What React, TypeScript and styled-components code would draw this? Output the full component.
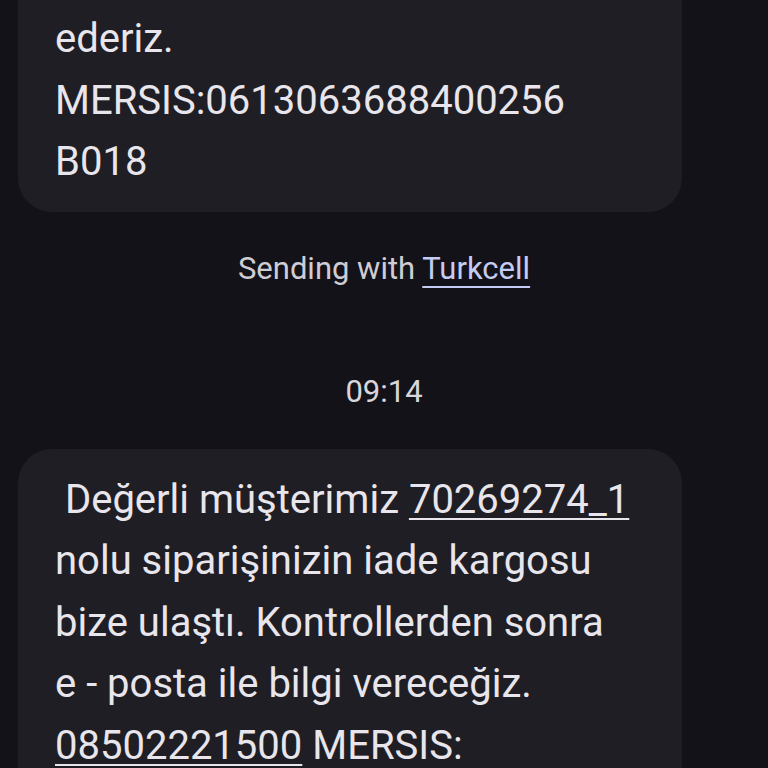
import React from 'react';
import styled, { createGlobalStyle } from 'styled-components';

const GlobalStyle = createGlobalStyle`
  html, body {
    margin: 0;
    padding: 0;
    background: #131218;
    height: 768px;
    overflow: hidden;
  }
  body {
    font-family: Roboto, "Noto Sans", "Liberation Sans", sans-serif;
  }
`;

const Screen = styled.div`
  display: flex;
  flex-direction: column;
  width: 768px;
  height: 768px;
  overflow: hidden;
  background: #131218;
`;

const Bubble = styled.div<{ $cutTop?: boolean }>`
  width: 664px;
  margin-left: 18px;
  box-sizing: border-box;
  background: #1f1e24;
  border-radius: ${({ $cutTop }) => ($cutTop ? '0 0 34px 34px' : '34px 34px 0 0')};
  padding: ${({ $cutTop }) => ($cutTop ? '8px 30px 19px 37px' : '20px 30px 0 37px')};
  flex-shrink: 0;
`;

const MessageText = styled.div`
  color: #e8e6ec;
  font-size: 40px;
  line-height: 61.5px;
  white-space: pre;
`;

const Link = styled.span`
  text-decoration: underline;
  text-decoration-thickness: 2px;
  text-underline-offset: 5px;
`;

const Notice = styled.div`
  margin-top: 38px;
  text-align: center;
  color: #cfcdd4;
  font-size: 31px;
  line-height: 38px;
`;

const Carrier = styled.span`
  color: #c5ccf4;
  text-decoration: underline;
  text-decoration-thickness: 2px;
  text-underline-offset: 7px;
`;

const Timestamp = styled.div`
  margin-top: 85px;
  text-align: center;
  color: #d8d6dc;
  font-size: 31px;
  line-height: 38px;
`;

const IncomingBubble = styled(Bubble)`
  margin-top: 38px;
`;

export default function App() {
  return (
    <Screen>
      <GlobalStyle />
      <Bubble $cutTop>
        <MessageText>
          {'ederiz.\nMERSIS:0613063688400256\nB018'}
        </MessageText>
      </Bubble>
      <Notice>
        Sending with <Carrier>Turkcell</Carrier>
      </Notice>
      <Timestamp>09:14</Timestamp>
      <IncomingBubble>
        <MessageText>
          {' Değerli müşterimiz '}
          <Link>70269274_1</Link>
          {'\nnolu siparişinizin iade kargosu\nbize ulaştı. Kontrollerden sonra\ne - posta ile bilgi vereceğiz.\n'}
          <Link>08502221500</Link>
          {' MERSIS:'}
        </MessageText>
      </IncomingBubble>
    </Screen>
  );
}
